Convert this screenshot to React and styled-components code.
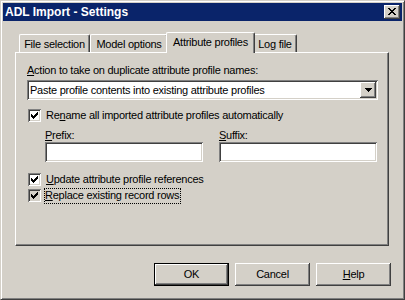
import React from 'react';
import styled, { createGlobalStyle, css } from 'styled-components';

const GlobalStyle = createGlobalStyle`
  html, body {
    margin: 0;
    padding: 0;
    background: #d4d0c8;
  }
  body {
    font-family: "Liberation Sans", Tahoma, Arial, sans-serif;
    font-size: 11px;
    letter-spacing: -0.25px;
    color: #000;
  }
`;

const raised = css`
  background: #d4d0c8;
  box-shadow: inset -1px -1px #404040, inset 1px 1px #fff,
    inset -2px -2px #808080, inset 2px 2px #d4d0c8;
`;

const sunken = css`
  box-shadow: inset 1px 1px #808080, inset -1px -1px #fff,
    inset 2px 2px #404040, inset -2px -2px #d4d0c8;
`;

const Window = styled.div`
  box-sizing: border-box;
  width: 405px;
  height: 300px;
  padding: 2px;
  border: 1px solid;
  border-color: #d4d0c8 #404040 #404040 #d4d0c8;
  box-shadow: inset 1px 1px #fff, inset -1px -1px #808080;
  background: #d4d0c8;
  display: flex;
  flex-direction: column;
`;

const TitleBar = styled.div`
  height: 18px;
  background: #0a246a;
  display: flex;
  align-items: center;
  justify-content: space-between;
  padding: 0 2px;
`;

const Title = styled.span`
  color: #fff;
  font-weight: bold;
  font-size: 12px;
  letter-spacing: 0;
  line-height: 14px;
`;

const CloseButton = styled.div`
  ${raised};
  width: 16px;
  height: 14px;
  display: flex;
  align-items: center;
  justify-content: center;
  padding: 0 1px 1px 0;
  box-sizing: border-box;
`;

const Content = styled.div`
  flex: 1;
  padding: 11px 12px 0 12px;
  display: flex;
  flex-direction: column;
`;

const TabStrip = styled.div`
  height: 20px;
  display: flex;
  align-items: flex-end;
  padding-left: 4px;
  position: relative;
  z-index: 1;
`;

const Tab = styled.div`
  box-sizing: border-box;
  width: ${(p) => p.$w}px;
  height: 18px;
  background: #d4d0c8;
  border-top: 1px solid #fff;
  border-left: 1px solid #fff;
  border-right: 1px solid #404040;
  box-shadow: inset -1px 0 #808080;
  border-radius: 2px 2px 0 0;
  display: flex;
  align-items: center;
  justify-content: center;
  padding-top: 1px;
  white-space: nowrap;
  position: relative;

  ${(p) =>
    p.$active &&
    css`
      height: 21px;
      margin: 0 -2px -1px -2px;
      z-index: 2;
      padding-top: 0;
      padding-bottom: 2px;
    `}
`;

const Panel = styled.div`
  box-sizing: border-box;
  width: 374px;
  height: 194px;
  border-top: 1px solid #fff;
  border-left: 1px solid #fff;
  border-right: 1px solid #404040;
  border-bottom: 1px solid #404040;
  box-shadow: inset -1px -1px #808080;
  padding: 11px 11px 0 11px;
  display: flex;
  flex-direction: column;
`;

const Label = styled.div`
  line-height: 13px;
  height: 13px;
  white-space: nowrap;
`;

const U = styled.span`
  text-decoration: underline;
`;

const Combo = styled.div`
  ${sunken};
  box-sizing: border-box;
  width: 351px;
  height: 20px;
  margin-top: 3px;
  background: #fff;
  padding: 2px;
  display: flex;
  align-items: center;
`;

const ComboText = styled.span`
  flex: 1;
  padding-left: 1px;
  white-space: nowrap;
  line-height: 13px;
`;

const ComboButton = styled.div`
  ${raised};
  width: 16px;
  height: 16px;
  display: flex;
  align-items: center;
  justify-content: center;
`;

const CheckRow = styled.div`
  display: flex;
  align-items: center;
  height: 13px;
  margin-top: ${(p) => p.$gap}px;
  padding-left: 1px;
`;

const Box = styled.span`
  ${sunken};
  box-sizing: border-box;
  width: 13px;
  height: 13px;
  margin-right: 5px;
  background: ${(p) => (p.$pressed ? '#d4d0c8' : '#fff')};
  display: flex;
  align-items: center;
  justify-content: center;
  flex-shrink: 0;
`;

const CheckLabel = styled.span`
  line-height: 13px;
  white-space: nowrap;
  ${(p) =>
    p.$focus &&
    css`
      outline: 1px dotted #000;
      outline-offset: 0;
      padding: 0 1px 1px 0;
      margin-left: -1px;
      margin-top: 1px;
    `}
`;

const Affixes = styled.div`
  display: grid;
  grid-template-columns: 158px 158px;
  column-gap: 16px;
  margin-top: 7px;
  padding-left: 18px;
`;

const Field = styled.div`
  display: flex;
  flex-direction: column;
`;

const TextBox = styled.div`
  ${sunken};
  height: 20px;
  background: #fff;
`;

const ButtonRow = styled.div`
  display: flex;
  justify-content: flex-end;
  gap: 6px;
  margin-top: 17px;
  margin-right: -1px;
`;

const Button = styled.div`
  ${raised};
  box-sizing: border-box;
  width: 75px;
  height: 23px;
  display: flex;
  align-items: center;
  justify-content: center;
  padding-bottom: 1px;

  ${(p) =>
    p.$default &&
    css`
      border: 1px solid #000;
    `}
`;

const checkCols = [2, 3, 4, 3, 2, 1, 0];

const CheckMark = () => (
  <svg width="7" height="7" viewBox="0 0 7 7" shapeRendering="crispEdges">
    {checkCols.map((y, x) => (
      <rect key={x} x={x} y={y} width="1" height="3" fill="#000" />
    ))}
  </svg>
);

const closeRows = [
  [0, 2, 6, 2],
  [1, 2, 5, 2],
  [2, 4],
  [3, 2],
  [2, 4],
  [1, 2, 5, 2],
  [0, 2, 6, 2],
];

const CloseGlyph = () => (
  <svg width="8" height="7" viewBox="0 0 8 7" shapeRendering="crispEdges">
    {closeRows.map((r, y) => (
      <g key={y}>
        <rect x={r[0]} y={y} width={r[1]} height="1" fill="#000" />
        {r.length > 2 && <rect x={r[2]} y={y} width={r[3]} height="1" fill="#000" />}
      </g>
    ))}
  </svg>
);

const DownArrow = () => (
  <svg width="7" height="4" viewBox="0 0 7 4" shapeRendering="crispEdges">
    <rect x="0" y="0" width="7" height="1" fill="#000" />
    <rect x="1" y="1" width="5" height="1" fill="#000" />
    <rect x="2" y="2" width="3" height="1" fill="#000" />
    <rect x="3" y="3" width="1" height="1" fill="#000" />
  </svg>
);

const Check = ({ gap, pressed, focus, children }) => (
  <CheckRow $gap={gap}>
    <Box $pressed={pressed}>
      <CheckMark />
    </Box>
    <CheckLabel $focus={focus}>{children}</CheckLabel>
  </CheckRow>
);

const tabs = [
  { label: 'File selection', w: 71 },
  { label: 'Model options', w: 78 },
  { label: 'Attribute profiles', w: 89, active: true },
  { label: 'Log file', w: 44 },
];

export default function App() {
  return (
    <>
      <GlobalStyle />
      <Window>
        <TitleBar>
          <Title>ADL Import - Settings</Title>
          <CloseButton>
            <CloseGlyph />
          </CloseButton>
        </TitleBar>
        <Content>
          <TabStrip>
            {tabs.map((t) => (
              <Tab key={t.label} $w={t.w} $active={t.active}>
                {t.label}
              </Tab>
            ))}
          </TabStrip>
          <Panel>
            <Label>
              <U>A</U>ction to take on duplicate attribute profile names:
            </Label>
            <Combo>
              <ComboText>Paste profile contents into existing attribute profiles</ComboText>
              <ComboButton>
                <DownArrow />
              </ComboButton>
            </Combo>
            <Check gap={9}>
              Re<U>n</U>ame all imported attribute profiles automatically
            </Check>
            <Affixes>
              <Field>
                <Label>
                  <U>P</U>refix:
                </Label>
                <TextBox />
              </Field>
              <Field>
                <Label>
                  <U>S</U>uffix:
                </Label>
                <TextBox />
              </Field>
            </Affixes>
            <Check gap={11}>
              <U>U</U>pdate attribute profile references
            </Check>
            <Check gap={3} pressed focus>
              <U>R</U>eplace existing record rows
            </Check>
          </Panel>
          <ButtonRow>
            <Button $default>OK</Button>
            <Button>Cancel</Button>
            <Button>
              <span>
                <U>H</U>elp
              </span>
            </Button>
          </ButtonRow>
        </Content>
      </Window>
    </>
  );
}
